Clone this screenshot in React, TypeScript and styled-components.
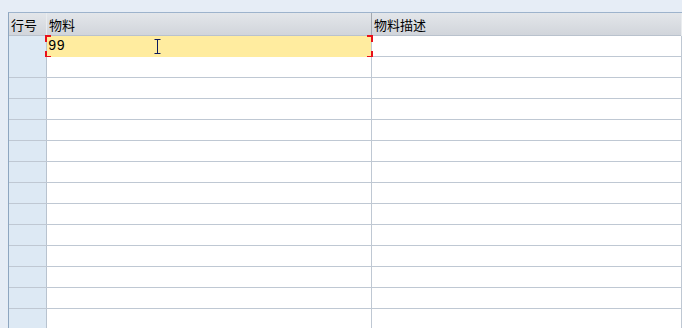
import React from 'react';
import styled, { createGlobalStyle } from 'styled-components';

const GlobalStyle = createGlobalStyle`
  html, body {
    margin: 0;
    padding: 0;
    background: #e6edf6;
    overflow: hidden;
  }
`;

const Page = styled.div`
  width: 682px;
  height: 328px;
  padding: 12px 0 0 8px;
  box-sizing: border-box;
  font-family: "Noto Sans CJK SC", "DejaVu Sans", sans-serif;
  font-size: 13px;
  color: #000;
`;

const Grid = styled.div`
  height: 100%;
  border-top: 1px solid #9db3cc;
  border-left: 1px solid #8ea6c0;
  background: #fff;
  overflow: hidden;
`;

const Row = styled.div<{ $header?: boolean }>`
  display: grid;
  grid-template-columns: 38px 325px 1fr;
  height: ${p => (p.$header ? 23 : 21)}px;
  box-sizing: border-box;
  border-bottom: 1px solid ${p => (p.$header ? '#b9c2cd' : '#bfc8d3')};
  background: ${p => (p.$header ? 'linear-gradient(#e3e6ea, #d1d5db)' : '#fff')};
  position: relative;
`;

const HeadCell = styled.div<{ $dark?: boolean }>`
  padding-left: 2px;
  line-height: 24px;
  white-space: nowrap;
  border-right: 1px solid ${p => (p.$dark ? '#a2a8b0' : '#e9ecef')};
`;

const NumCell = styled.div`
  background: #dde9f4;
  border-right: 1px solid #b8c3cf;
`;

const Cell = styled.div<{ $active?: boolean }>`
  background: ${p => (p.$active ? '#ffec9f' : 'transparent')};
  border-right: 1px solid #bfc8d3;
  padding-left: 1px;
  line-height: 21px;
  font-family: "Liberation Mono", monospace;
  font-size: 14px;
  position: relative;
`;

const Corner = styled.span<{ $side: 'left' | 'right'; $edge: 'top' | 'bottom' }>`
  position: absolute;
  width: 4px;
  height: 5px;
  ${p => p.$side}: -2px;
  ${p => p.$edge}: -1px;
  border-${p => p.$edge}: 2px solid #e8101a;
  border-${p => p.$side}: 2px solid #e8101a;
`;

const Caret = styled.svg`
  position: absolute;
  left: 107px;
  top: 3px;
`;

const rows = Array.from({ length: 13 });

export default function App() {
  return (
    <>
      <GlobalStyle />
      <Page>
        <Grid>
          <Row $header>
            <HeadCell>行号</HeadCell>
            <HeadCell $dark>物料</HeadCell>
            <HeadCell>物料描述</HeadCell>
          </Row>
          <Row>
            <NumCell />
            <Cell $active>
              99
              <Corner $side="left" $edge="top" />
              <Corner $side="left" $edge="bottom" />
              <Corner $side="right" $edge="top" />
              <Corner $side="right" $edge="bottom" />
              <Caret width="7" height="15" viewBox="0 0 7 15">
                <path d="M0.5 0.5h6M3.5 0.5v14M0.5 14.5h6" stroke="#0b1a5e" strokeWidth="1" fill="none" />
              </Caret>
            </Cell>
            <Cell />
          </Row>
          {rows.map((_, i) => (
            <Row key={i}>
              <NumCell />
              <Cell />
              <Cell />
            </Row>
          ))}
        </Grid>
      </Page>
    </>
  );
}
